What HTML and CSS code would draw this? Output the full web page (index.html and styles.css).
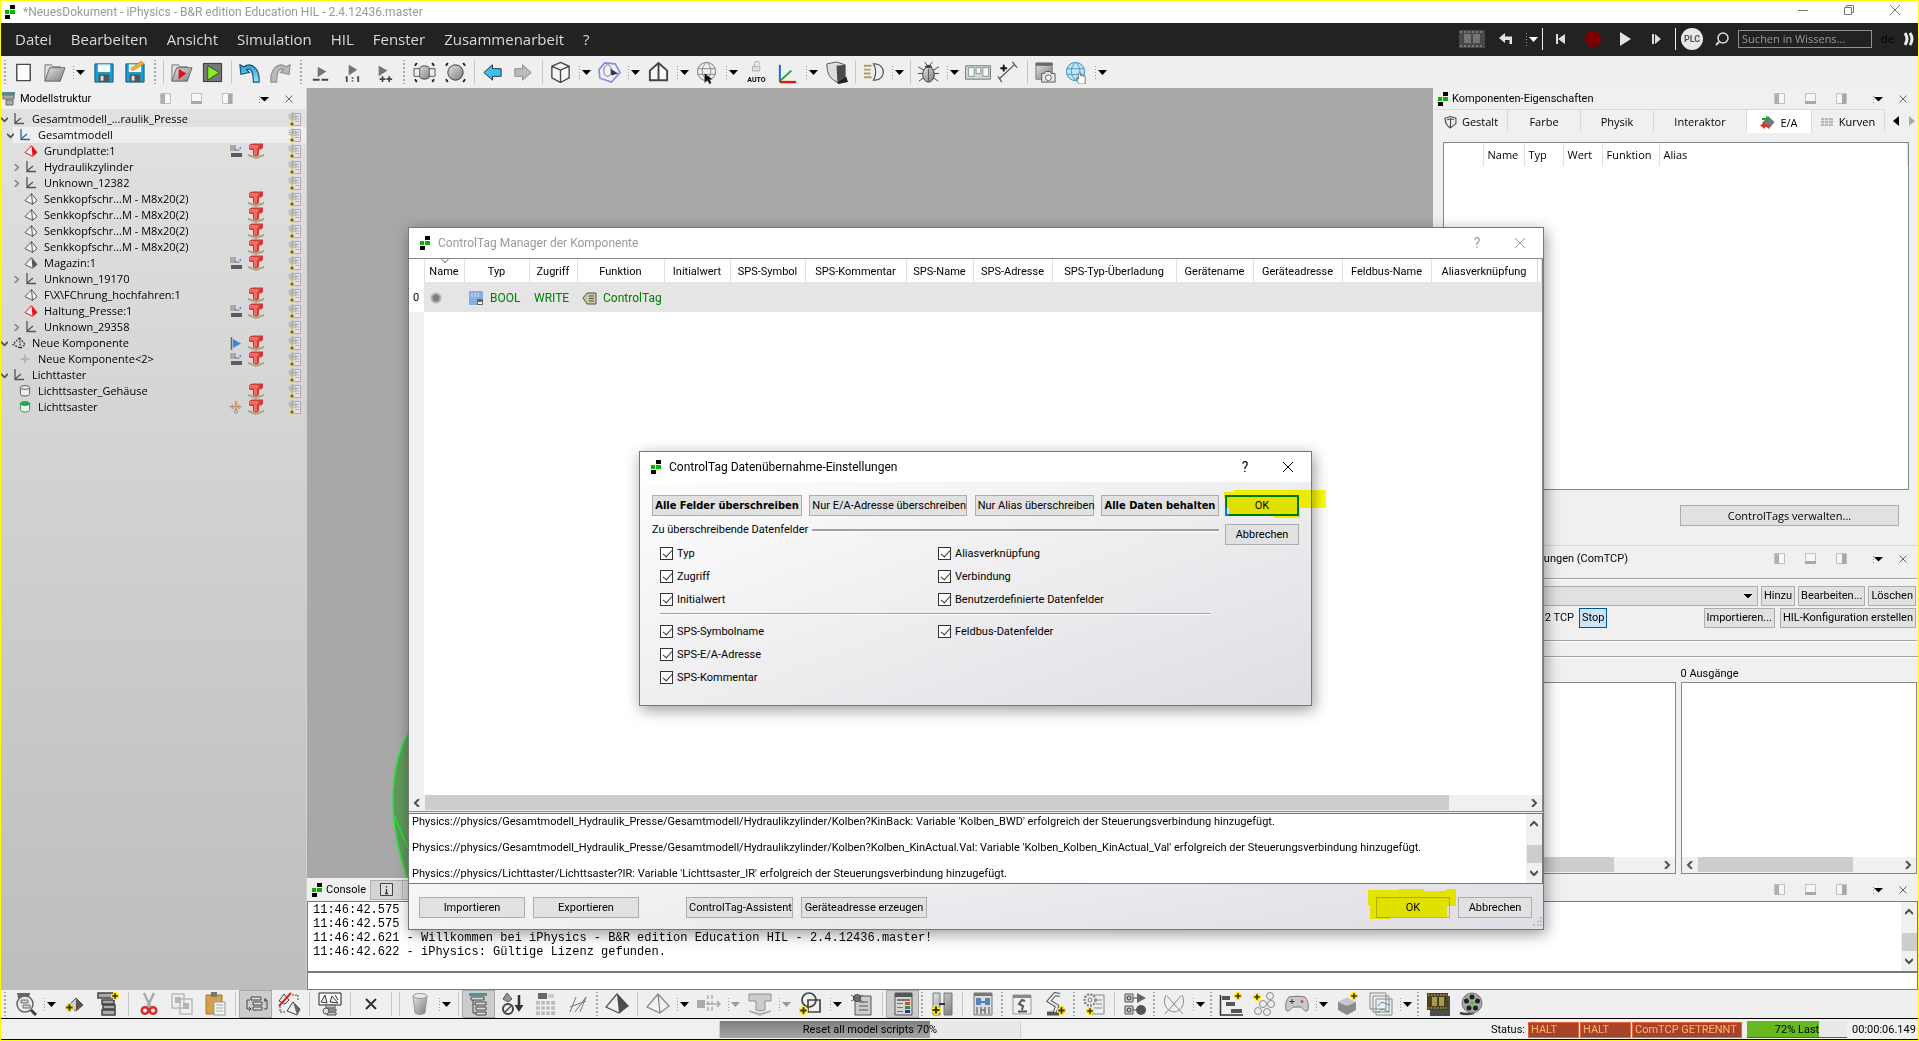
FILE: index.html
```
<!DOCTYPE html>
<html lang="de">
<head>
<meta charset="utf-8">
<title>*NeuesDokument - iPhysics</title>
<link rel="stylesheet" href="styles.css">
</head>
<body>
<svg class="defs" aria-hidden="true">
<defs>
<linearGradient id="gr" x1="0" y1="0" x2="1" y2="1"><stop offset="0" stop-color="#e4e4e4"/><stop offset="1" stop-color="#7c7c7c"/></linearGradient>
<linearGradient id="bl" x1="0" y1="0" x2="0" y2="1"><stop offset="0" stop-color="#1aa3dc"/><stop offset="1" stop-color="#9fe0ff"/></linearGradient>
</defs>
<symbol id="logo" viewBox="0 0 10 14"><path d="M5 0h5v4H5zM0 10h5v4H0z" fill="#000"/><path d="M0 5h4v4H0zM5 5h5v4H5z" fill="#00b400"/></symbol>
<symbol id="dock-l" viewBox="0 0 12 12"><path d="M.5.5h10v10H.5z" fill="#f6f6f6" stroke="#c0c0c0"/><path d="M1 1h4v10H1z" fill="#b0b0b0"/></symbol>
<symbol id="dock-b" viewBox="0 0 12 12"><path d="M.5.5h10v10H.5z" fill="#f6f6f6" stroke="#c0c0c0"/><path d="M0 8h11v3H0z" fill="#a8a8a8"/></symbol>
<symbol id="dock-r" viewBox="0 0 12 12"><path d="M.5.5h10v10H.5z" fill="#f6f6f6" stroke="#c0c0c0"/><path d="M6 1h4v10H6z" fill="#a8a8a8"/></symbol>
<symbol id="dd" viewBox="0 0 14 16"><path d="M1.500 2v13" stroke="#999" stroke-dasharray="1 2"/><path d="M4 6h9L8.500 11z" fill="currentColor"/></symbol>
<symbol id="menu" viewBox="0 0 12 10"><path d="M1 2.500h1M1 5.500h1M1 8.500h1" stroke="#888"/><path d="M2 3h9L6.500 7.500z"/></symbol>
<symbol id="x" viewBox="0 0 10 10"><path d="M1.500 1.500l7 7M8.500 1.500l-7 7" stroke="currentColor" fill="none"/></symbol>
<symbol id="al" viewBox="0 0 8 8"><path d="M6 0L2 4l4 4" fill="none" stroke="#505050" stroke-width="2"/></symbol>
<symbol id="ar" viewBox="0 0 8 8"><path d="M2 0l4 4-4 4" fill="none" stroke="#505050" stroke-width="2"/></symbol>
<symbol id="au" viewBox="0 0 8 8"><path d="M0 6l4-4 4 4" fill="none" stroke="#505050" stroke-width="2"/></symbol>
<symbol id="ad" viewBox="0 0 8 8"><path d="M0 2l4 4 4-4" fill="none" stroke="#505050" stroke-width="2"/></symbol>

<symbol id="t-axes" viewBox="0 0 12 12"><path d="M2 0v10.500h9M2 10l6-5" fill="none" stroke="currentColor" stroke-width="1.300"/></symbol>
<symbol id="t-pyr" viewBox="0 0 14 12"><path d="M7.500.7L1 7.500l7.500 3.800L13 7.500z" fill="#f4f4f4" stroke="currentColor"/><path d="M7.500.7l1 10.600" stroke="currentColor"/></symbol>
<symbol id="t-pyrf" viewBox="0 0 14 12"><path d="M7.500.7L1 7.500l7.500 3.800L13 7.500z" fill="#f4f4f4" stroke="currentColor"/><path d="M7.500.7l1 10.600L13 7.500z" fill="currentColor"/></symbol>
<symbol id="t-dash" viewBox="0 0 14 12"><path d="M7.500.7L1 7.500l7.500 3.800L13 7.500zl1 10.600" fill="none" stroke="#444" stroke-width="1.300" stroke-dasharray="2 1"/></symbol>
<symbol id="t-star" viewBox="0 0 14 14"><path d="M7 0l1.500 5.500L14 7 8.500 8.500 7 14 5.500 8.500 0 7l5.500-1.500z" fill="#b4b4b4"/></symbol>
<symbol id="t-cup" viewBox="0 0 12 13"><path d="M1 2.500v6.500c0 2 2 3 5 3s5-1 5-3V2.500" fill="#eee" stroke="currentColor"/><ellipse cx="6" cy="2.700" rx="5" ry="2" fill="var(--lid,#eee)" stroke="currentColor"/></symbol>
<symbol id="c-kin" viewBox="0 0 14 13"><path d="M1 0h6v6H1z" fill="#aaa"/><path d="M2 8h11v4H2z" fill="#5c5c5c"/><path d="M6 4c2 3 5 1 6-3" fill="none" stroke="#3e86c8" stroke-width="1.500" stroke-dasharray="2 1"/></symbol>
<symbol id="c-flag" viewBox="0 0 12 13"><path d="M1.500 0v13" stroke="#666" stroke-width="1.500"/><path d="M3 2l8 4.500L3 11z" fill="#3b8ad8"/></symbol>
<symbol id="c-mot" viewBox="0 0 14 14"><path d="M0 6h13M10 4v5M3 4v5" stroke="#999" stroke-width="1.500"/><path d="M7 0v10" stroke="#f0953a" stroke-width="2.500"/><circle cx="7" cy="11.500" r="1.700" fill="#ddd" stroke="#888"/></symbol>
<symbol id="c-red" viewBox="0 0 16 16"><path d="M0 11l8 2.500L16 11v2l-8 3-8-3z" fill="#b5a277"/><path d="M1 2l3-1.500h11V5l-2 1.500h-2V12l-3 1.500L5 12V7H2L1 6z" fill="#d23a3e"/><path d="M1.500 2h9v3H9v7H6V5.500H1.500z" fill="#f06a6c"/></symbol>
<symbol id="c-cfg" viewBox="0 0 13 15"><path d="M4.500 1.500h8v12h-8z" fill="#e4e4e4" stroke="#aaa"/><path d="M7 4.500h4M7 7h4M7 9.500h4" stroke="#aaa"/><circle cx="4.500" cy="4.500" r="3.300" fill="none" stroke="#aaa" stroke-width="1.500" stroke-dasharray="1.500 .8"/><circle cx="4.500" cy="4.500" r="1.500" fill="none" stroke="currentColor"/><path d="M4 9.500v5M1.500 12h5" stroke="#e8da50" stroke-width="2.500"/><path d="M4 10.500v3M2.500 12h3" stroke="#665a10" stroke-width="1.300"/></symbol>
<symbol id="plus" viewBox="0 0 10 10"><path d="M5 0v10M0 5h10" stroke="#ffe626" stroke-width="5"/><path d="M5 1.500v7M1.500 5h7" stroke="#3a3500" stroke-width="2"/></symbol>

<symbol id="new" viewBox="0 0 24 24"><path d="M5 3.500h14v17H5z" fill="#fff" stroke="#4a4a4a" stroke-width="1.500"/></symbol>
<symbol id="open" viewBox="0 0 24 24"><path d="M2 21V4h7l1 2h8v4" fill="#ddd" stroke="#777"/><path d="M2 21L7 7h16l-5 14z" fill="url(#gr)" stroke="#666"/></symbol>
<symbol id="save" viewBox="0 0 24 24"><path d="M3 3h19v19H3z" fill="#1d9bd1" stroke="#0e5e85"/><path d="M6 3.500h13v8H6z" fill="#f6f6f6"/><path d="M7 14h11v8H7z" fill="#555"/><path d="M9 15.500h3v5H9z" fill="#ddd"/></symbol>
<symbol id="saveas" viewBox="0 0 24 24"><use href="#save"/><path d="M8 8L19 0l3 3L10 10z" fill="#f2b526" stroke="#a87508" stroke-width=".6"/></symbol>
<symbol id="runf" viewBox="0 0 24 24"><use href="#open"/><path d="M9 8l8 5-8 6z" fill="#e01010"/></symbol>
<symbol id="rung" viewBox="0 0 24 24"><path d="M2.500 2.500h19v19h-19z" fill="#777" stroke="#333"/><path d="M7 5l12 7-12 8z" fill="#84f01c" stroke="#234" stroke-width=".8"/></symbol>
<symbol id="undo" viewBox="0 0 24 24"><path d="M2 4l1 10 9-2-3-3c4-2 7 1 7 13h6C23 9 15 0 6 6z" fill="url(#bl)" stroke="#20506c" stroke-width="1.200"/></symbol>
<symbol id="redo" viewBox="0 0 24 24"><path d="M22 4l-1 10-9-2 3-3c-4-2-7 1-7 13H2C1 9 9 0 18 6z" fill="#b9b9b9" stroke="#909090" stroke-width="1.200"/></symbol>
<symbol id="slow" viewBox="0 0 24 24"><path d="M8 6l9 5-9 6z" fill="#747474"/><path d="M3 19.500h7M12 19.500h7" stroke="#444" stroke-width="2"/></symbol>
<symbol id="one" viewBox="0 0 24 24"><path d="M8 4l9 5-9 6z" fill="#747474"/><path d="M6 16v6M18 16v6M12 17v1.500M12 20v1.500M5 17.500l1-1M17 17.500l1-1" stroke="#444" stroke-width="1.800"/></symbol>
<symbol id="fast" viewBox="0 0 24 24"><path d="M7 5l9 5-9 6z" fill="#747474"/><path d="M8 19h6M11 16v6M15 19h6M18 16v6" stroke="#444" stroke-width="1.800"/></symbol>
<symbol id="fit" viewBox="0 0 24 24"><path d="M2 5l2-3M20 2l2 3M22 19l-2 3M4 22l-2-3" fill="none" stroke="#222" stroke-width="2"/><circle cx="12" cy="12" r="7" fill="url(#gr)" stroke="#444"/><path d="M1 8h6v8H1zM17 8h6v8h-6z" fill="#eee" stroke="#555"/></symbol>
<symbol id="fit2" viewBox="0 0 24 24"><path d="M2 5l2-3M20 2l2 3M22 19l-2 3M4 22l-2-3" fill="none" stroke="#222" stroke-width="2"/><circle cx="12" cy="12" r="8" fill="url(#gr)" stroke="#333"/></symbol>
<symbol id="left" viewBox="0 0 24 24"><path d="M3 12l9-8v4h9v8h-9v4z" fill="#3dbdf2" stroke="#234" /></symbol>
<symbol id="right" viewBox="0 0 24 24"><path d="M20 12l-9-8v4H3v8h8v4z" fill="#bbb" stroke="#888"/></symbol>
<symbol id="cube" viewBox="0 0 24 24"><path d="M12 1.500l9 4v12l-9 5-9-5v-12zM3 5.500l9 4 9-4M12 9.500v13" fill="#f6f6f6" stroke="#444" stroke-width="1.400"/></symbol>
<symbol id="gem" viewBox="0 0 24 24"><path d="M7 2l11 1 5 9-9 10L2 18 1 9z" fill="#eef" stroke="#8b8bdc" stroke-width="1.700"/><ellipse cx="10" cy="10" rx="4" ry="6" fill="none" stroke="#777"/><path d="M13 8l8 5-7 2z" fill="#333"/></symbol>
<symbol id="house" viewBox="0 0 24 24"><path d="M12 2l9 8v10H3V10zM12 2v18" fill="#fafafa" stroke="#444" stroke-width="2"/></symbol>
<symbol id="globe" viewBox="0 0 24 24"><circle cx="11" cy="11" r="9.500" fill="#eee" stroke="#777"/><path d="M2 8h18M2 14h18M11 1c-6 6-6 13 0 19M11 1c6 6 6 13 0 19" fill="none" stroke="#888"/><path d="M9 13v10l3-3 2 4 2-1-2-4h3z" fill="#111"/></symbol>
<symbol id="lock" viewBox="0 0 24 24"><path d="M9 8V4a3.500 3.500 0 017 0v2" fill="none" stroke="#aaa" stroke-width="1.500"/><path d="M6 8h11v7H6z" fill="#ddd" stroke="#999"/></symbol>
<symbol id="axes" viewBox="0 0 24 24"><path d="M4 4v18" stroke="#1468c8" stroke-width="2"/><path d="M4 21L16 10" stroke="#20a038" stroke-width="2"/><path d="M4 22h17" stroke="#e01818" stroke-width="2.500"/></symbol>
<symbol id="shield" viewBox="0 0 24 24"><path d="M12 22l10-6 2 6-10 2z" fill="#222"/><path d="M2 3l10-2 9 3v12l-8 6c-8-3-11-9-11-19z" fill="#ddd" stroke="#555"/><path d="M12 5l9-1v12l-8 6z" fill="#4a4a4a"/></symbol>
<symbol id="light" viewBox="0 0 24 24"><path d="M2 5h8M2 9h7M2 13h7M2 17h8" stroke="#a6a268" stroke-width="2"/><path d="M12 3h2c11 1 11 16 0 17h-2c3-5 3-12 0-17z" fill="#eee" stroke="#555" stroke-width="1.300"/></symbol>
<symbol id="bug" viewBox="0 0 24 24"><path d="M1 6l7 4M23 6l-7 4M1 13h22M2 21l7-5M22 21l-7-5M8 1l3 4M16 1l-3 4" stroke="#444"/><ellipse cx="12" cy="14" rx="6" ry="8" fill="url(#gr)" stroke="#333"/><path d="M8 7c1-4 7-4 8 0z" fill="#444"/><path d="M12 8v13" stroke="#555"/></symbol>
<symbol id="panel" viewBox="0 0 28 24"><path d="M1 5h26v14H1z" fill="#cfd8d4" stroke="#777"/><path d="M4 7h6v9H4zM12 7h5v6h-5zM19 7h6v9h-6z" fill="#f4f8f6" stroke="#8a9a94"/></symbol>
<symbol id="pen" viewBox="0 0 24 24"><path d="M3 18L18 4M1 16l4 6M16 1l5 6" stroke="#555" stroke-width="1.300"/><path d="M7 4v7M3.500 7.500h7" stroke="#111" stroke-width="2"/></symbol>
<symbol id="cam" viewBox="0 0 24 24"><path d="M2 2h17v17H2z" fill="url(#gr)" stroke="#777"/><path d="M2 2h17v3H2z" fill="#666"/><path d="M8 13h3l1-2h5l1 2h4v9H8z" fill="#e6e6e6" stroke="#555"/><circle cx="15" cy="17.500" r="3" fill="#fff" stroke="#555"/></symbol>
<symbol id="web" viewBox="0 0 24 24"><circle cx="11" cy="11" r="9.500" fill="#bfe3f4" stroke="#3d89b0"/><path d="M2 8h18M2 14h18M11 1c-6 6-6 13 0 19M11 1c6 6 6 13 0 19" fill="none" stroke="#4e9cc4"/><path d="M14 13v6l-2-1 1 4 2 2h6v-8l-5-1v-3z" fill="#fff" stroke="#555" stroke-width=".8"/></symbol>

<symbol id="find" viewBox="0 0 24 24"><path d="M3 1h13l-1 5H4z" fill="#666"/><circle cx="11" cy="12" r="8" fill="#e8eceb" stroke="#666" stroke-width="1.500"/><path d="M7 8h7v3H7zM9 13h7v3H9z" fill="#ccc" stroke="#777"/><path d="M17 18l5 5" stroke="#444" stroke-width="3"/></symbol>
<symbol id="conep" viewBox="0 0 24 24"><path d="M13 6l-8 8 8 5 7-6z" fill="#ccc" stroke="#555"/><path d="M13 6v13l7-6z" fill="#555"/><use href="#plus" x="2" y="11" width="9" height="9"/></symbol>
<symbol id="stackp" viewBox="0 0 24 24"><path d="M2 1h15v5H2zM6 8h12v4H6zM7 13h12v4H7zM6 18h13v5H6z" fill="#aaa" stroke="#444" stroke-width="1.500"/><use href="#plus" x="15" y="0" width="8" height="8"/></symbol>
<symbol id="cut" viewBox="0 0 24 24"><path d="M7 1l7 15M17 1l-7 15" stroke="#aaa" stroke-width="2.500"/><circle cx="8" cy="18.500" r="3.300" fill="none" stroke="#d82c30" stroke-width="2.500"/><circle cx="16" cy="18.500" r="3.300" fill="none" stroke="#d82c30" stroke-width="2.500"/></symbol>
<symbol id="copy" viewBox="0 0 24 24"><path d="M2 2h12v14H2zM10 7h12v15H10z" fill="#eee" stroke="#bbb" stroke-width="1.500"/><path d="M5 5h6v6H5zM13 11h6v6h-6z" fill="#b4b4b4"/></symbol>
<symbol id="paste" viewBox="0 0 24 24"><path d="M3 3h16v19H3z" fill="#d5a04a" stroke="#a87424"/><path d="M8 0h6v5H8z" fill="#777"/><path d="M11 10h11v13H11z" fill="#f4f4f4" stroke="#999"/><path d="M13 13h7M13 16h7M13 19h7" stroke="#aaa"/></symbol>
<symbol id="list" viewBox="0 0 24 24"><path d="M7 5h10v3H7zM9 10h9v3H9zM9 15h9v3H9z" fill="#ddd" stroke="#444"/><path d="M6 8H3v9h4M5 15l2 2-2 2M20 17h3V8h-3M22 6l-2 2 2 2" fill="none" stroke="#444"/></symbol>
<symbol id="strike" viewBox="0 0 24 24"><path d="M7 2L2 9l6 3 4-4zM16 10l-6 9 10 4 3-6z" fill="#eee" stroke="#444"/><path d="M16 10l4 13 3-6z" fill="#666"/><path d="M15 3h6v5M3 14v6h5" fill="none" stroke="#444" stroke-dasharray="2 1"/><path d="M2 14L14 1" stroke="#e02020" stroke-width="2"/></symbol>
<symbol id="present" viewBox="0 0 24 24"><path d="M1 1h22v12H1z" fill="#fff" stroke="#222"/><path d="M7 3l-4 7 6 1zM14 4l-2 6 8 1zM17 3l3 5" fill="#eee" stroke="#333"/><path d="M8 13h9v3H8zM9 17h9v2H9zM9 20h9v3H9z" fill="#bbb" stroke="#555"/><circle cx="8" cy="19" r="3" fill="#ddd" stroke="#555"/></symbol>
<symbol id="bigx" viewBox="0 0 24 24"><path d="M7 7l10 10M17 7L7 17" stroke="#333" stroke-width="2"/></symbol>
<symbol id="trash" viewBox="0 0 24 24"><path d="M5 4l2 17c3 2 7 2 10 0l2-17z" fill="url(#gr)" stroke="#999"/><ellipse cx="12" cy="4" rx="7" ry="2.500" fill="#e8e8e8" stroke="#999"/></symbol>
<symbol id="tree" viewBox="0 0 24 24"><path d="M4 5h13v3H4zM8 10h11v3H8zM9 15h10v3H9zM9 20h10v3H9z" fill="#ddd" stroke="#444"/><path d="M2 1h18v3H2z" fill="#3f9c9c"/><path d="M6 8v13h3" fill="none" stroke="#444"/></symbol>
<symbol id="sort" viewBox="0 0 24 24"><path d="M7 1L3 7l5 3 4-3z" fill="#999" stroke="#555"/><circle cx="8" cy="17" r="5" fill="none" stroke="#444" stroke-width="2"/><path d="M4.500 20.500l7-7" stroke="#444" stroke-width="1.500"/><path d="M19 3v14" stroke="#333" stroke-width="2.500"/><path d="M14.500 13h9L19 20z" fill="#333"/></symbol>
<symbol id="grid" viewBox="0 0 24 24"><path d="M5 1h9v6H5z" fill="#666"/><path d="M15 2h6v4h-6z" fill="#ccc"/><path d="M3 9h19v14H3z" fill="#bcbcbc"/><path d="M3 13.500h19M3 18.500h19M7.500 9v14M12.500 9v14M17.500 9v14" stroke="#f2f2f2" stroke-width="1.300"/></symbol>
<symbol id="hatch" viewBox="0 0 24 24"><path d="M4 20l6-15M9 20L20 5M14 20l6-15M4 15l16-6" fill="none" stroke="#777"/></symbol>
<symbol id="pyr" viewBox="0 0 24 24"><path d="M12 2L1 15l13 6 9-7z" fill="#f2f2f2" stroke="#555" stroke-width="1.300"/><path d="M12 2l2 19 9-7z" fill="#4c4c4c"/></symbol>
<symbol id="pyro" viewBox="0 0 24 24"><path d="M12 2L1 15l13 6 9-7zl2 19" fill="#f2f2f2" stroke="#888" stroke-width="1.300"/></symbol>
<symbol id="pipe" viewBox="0 0 24 24"><path d="M0 8h8v8H0z" fill="#aaa"/><path d="M11 3v18M15 3v18" stroke="#bbb" stroke-width="2" stroke-dasharray="4 2"/><path d="M9 12h14M20 9l3 3-3 3" fill="none" stroke="#aaa" stroke-width="1.500"/></symbol>
<symbol id="tee" viewBox="0 0 24 24"><path d="M1 18l11 3 11-3v2l-11 4-11-4z" fill="#b4b4b4"/><path d="M1 2h22v7h-6v9l-5 1-4-1V9H1z" fill="#ccc" stroke="#909090"/></symbol>
<symbol id="shapes" viewBox="0 0 24 24"><circle cx="10" cy="8" r="7" fill="none" stroke="#444" stroke-width="1.700"/><path d="M9 8h12v12H9z" fill="none" stroke="#444" stroke-width="1.700"/><use href="#plus" x="0" y="14" width="9" height="9"/></symbol>
<symbol id="buglist" viewBox="0 0 24 24"><path d="M5 4h16v19H5z" fill="#ccc" stroke="#555"/><path d="M9 10h9M9 14h9M9 18h9" stroke="#555"/><circle cx="7" cy="6" r="3.500" fill="#888" stroke="#333"/><path d="M1 3l12 7M1 9l12-6" stroke="#444" stroke-width=".8"/></symbol>
<symbol id="props" viewBox="0 0 24 24"><path d="M4 1h17v22H4z" fill="#d6d6d6" stroke="#555"/><path d="M4 1h17v4H4z" fill="#555"/><path d="M6 7h13v2H6zM6 11h6v1H6zM6 15h6v1H6zM6 19h6v1H6z" fill="#777"/><path d="M14 10h5v3h-5z" fill="#d05020"/><path d="M14 14h5v3h-5z" fill="#28903c"/><path d="M14 18h5v3h-5z" fill="#203c90"/></symbol>
<symbol id="hplus" viewBox="0 0 24 24"><path d="M3 1h7v22H3zM14 1h8v22h-8z" fill="url(#gr)" stroke="#777"/><path d="M9 12h6" stroke="#333" stroke-width="2"/><use href="#plus" x="1" y="13" width="10" height="10"/></symbol>
<symbol id="hh" viewBox="0 0 24 24"><path d="M3 1h18v22H3z" fill="#ddd" stroke="#777"/><path d="M3 1h18v3H3z" fill="#777"/><path d="M5 6h5v7H5zM14 6h5v7h-5zM8 9h8v2H8z" fill="#5c80b8"/><path d="M6 15v7M10 15v7M14 15v7M18 15v7M10 18h4" stroke="#444"/></symbol>
<symbol id="robot" viewBox="0 0 24 24"><path d="M3 3h18v19H3z" fill="#f0f0f0" stroke="#999"/><path d="M3 3h18v3H3z" fill="#888"/><path d="M15 9l-3-1-3 4 4 2-1 4M8 19.500h9" fill="none" stroke="#555" stroke-width="2"/></symbol>
<symbol id="robotp" viewBox="0 0 24 24"><path d="M17 3l-5-1-6 7 8 5-2 6M4 21.500h12" fill="none" stroke="#555" stroke-width="4"/><path d="M17 3l-5-1-6 7 8 5-2 6" fill="none" stroke="#eee" stroke-width="2"/><use href="#plus" x="14" y="14" width="9" height="9"/></symbol>
<symbol id="gearp" viewBox="0 0 24 24"><path d="M9 3h13v19H9z" fill="#eee" stroke="#888"/><path d="M14 8h6M14 12h6M12 16h8" stroke="#888"/><circle cx="8" cy="8" r="5.500" fill="#eee" stroke="#888" stroke-width="2.500" stroke-dasharray="2 1.200"/><circle cx="8" cy="8" r="2" fill="none" stroke="#777"/><use href="#plus" x="4" y="15" width="8" height="8"/></symbol>
<symbol id="playg" viewBox="0 0 24 24"><path d="M2 2h8v8H2zM2 14h8v8H2z" fill="#ccc" stroke="#555"/><circle cx="6" cy="6" r="2" fill="none" stroke="#333"/><circle cx="6" cy="18" r="2" fill="none" stroke="#333"/><path d="M10 6h4M10 18h4" stroke="#444"/><path d="M14 1l9 5-9 5z" fill="#666"/><circle cx="18" cy="18" r="5" fill="#555"/></symbol>
<symbol id="arcs" viewBox="0 0 24 24"><path d="M4 3c-4 8 0 16 8 17 8-1 12-9 8-17M3 22L19 4M21 22L5 4" fill="none" stroke="#8c8c8c"/></symbol>
<symbol id="gantt" viewBox="0 0 24 24"><path d="M1.500 3v20H24" fill="none" stroke="#333" stroke-width="1.500"/><path d="M3 4h8v4H3zM7 10h9v4H7zM12 17h11v4H12z" fill="#555"/><use href="#plus" x="15" y="0" width="8" height="8"/></symbol>
<symbol id="chain" viewBox="0 0 24 24"><g fill="#eee" stroke="#888"><circle cx="18" cy="4" r="3.500"/><circle cx="19" cy="12" r="3.500"/><circle cx="11" cy="12" r="3.500"/><circle cx="6" cy="19" r="3.500"/><circle cx="15" cy="20" r="3.500"/></g><use href="#plus" x="1" y="1" width="8" height="8"/></symbol>
<symbol id="pad" viewBox="0 0 24 24"><path d="M4 5c4-1 12-1 16 0 3 3 4 9 3 13-2 3-5-1-7-3H8c-2 2-5 6-7 3C0 14 1 8 4 5z" fill="#c9c9c9" stroke="#777"/><path d="M7 7v5M4.500 9.500h5" stroke="#333"/><circle cx="17" cy="9.500" r="1.500" fill="#d05050"/></symbol>
<symbol id="boxp" viewBox="0 0 24 24"><path d="M2 10l9-4 9 4v8l-9 5-9-5z" fill="#8c8c8c"/><path d="M2 10l9-4 9 4-9 4z" fill="#c8c8c8"/><use href="#plus" x="14" y="0" width="8" height="8"/></symbol>
<symbol id="curves" viewBox="0 0 24 24"><path d="M1 1h16v16H1zM4 4h16v16H4zM7 7h16v16H7z" fill="#eee" stroke="#888"/><path d="M9 14c4-7 6-2 12-1" fill="none" stroke="#4090c8"/><path d="M9 21c4-7 6-2 12-1" fill="none" stroke="#30a850"/></symbol>
<symbol id="film" viewBox="0 0 24 24"><path d="M4 4h20v20H4z" fill="#4d4d4d"/><path d="M1 1h21v17H1z" fill="#4c4218"/><path d="M6 5h5v9H6zM13 5h5v9h-5z" fill="#a8985a"/><path d="M2 3h19M2 16h19" stroke="#d8c888" stroke-dasharray="1.500 1.500"/></symbol>
<symbol id="reel" viewBox="0 0 24 24"><path d="M1 21c6 2 10 1 14 0" stroke="#444" stroke-width="2.500" fill="none"/><circle cx="13" cy="11" r="10" fill="#a6a6a6" stroke="#777"/><g fill="#222"><circle cx="13" cy="5" r="2.500"/><circle cx="18.500" cy="9" r="2.500"/><circle cx="7.500" cy="9" r="2.500"/><circle cx="10" cy="16" r="2.500"/><circle cx="16.500" cy="16" r="2.500"/></g><circle cx="13" cy="11" r="2" fill="#52c832"/></symbol>
</svg>

<div class="app">
<header class="titlebar">
  <svg class="logo"><use href="#logo"/></svg>
  <span class="wtitle dim">*NeuesDokument - iPhysics - B&amp;R edition Education HIL - 2.4.12436.master</span>
  <span class="wincontrols">
    <button aria-label="Minimieren"><svg width="12" height="12"><path d="M1 6.500h10" stroke="#777"/></svg></button>
    <button aria-label="Wiederherstellen"><svg width="12" height="12"><path d="M1.500 3.500h7v7h-7zM3.500 3V1.500h7v7H9" fill="none" stroke="#777"/></svg></button>
    <button aria-label="Schließen"><svg width="12" height="12"><path d="M1 1l10 10M11 1L1 11" stroke="#777"/></svg></button>
  </span>
</header>

<nav class="menubar">
  <button>Datei</button><button>Bearbeiten</button><button>Ansicht</button><button>Simulation</button><button>HIL</button><button>Fenster</button><button>Zusammenarbeit</button><button>?</button>
  <div class="playback">
    <button aria-label="Film"><svg width="27" height="20"><path d="M0 1h26v18H0z" fill="#484848"/><path d="M5 5h7v9H5zM14 5h7v9h-7z" fill="#747474"/><path d="M1 3h24M1 17h24" stroke="#888" stroke-width="1.500" stroke-dasharray="2 2"/></svg></button>
    <button aria-label="Zurück" class="w-m"><svg width="14" height="14"><path d="M0 6l6-5v3.500h7V12h-2.500V8H6v3z" fill="#e4e4e4"/></svg></button>
    <button aria-label="Mehr" class="w-s"><svg width="14" height="16"><use href="#dd"/></svg></button>
    <i class="vbar"></i>
    <button aria-label="Anfang"><svg width="12" height="12"><path d="M1 1h2v10H1zM10 1v10L3 6z" fill="#ddd"/></svg></button>
    <button aria-label="Aufnahme"><svg width="18" height="18"><circle cx="9" cy="9" r="8" fill="#800000"/></svg></button>
    <button aria-label="Start"><svg width="14" height="16"><path d="M2 1l11 7-11 7z" fill="#e4e4e4"/></svg></button>
    <button aria-label="Schritt"><svg width="12" height="12"><path d="M1 1h2v10H1zM4 1l6 5-6 5z" fill="#ddd"/></svg></button>
    <i class="vbar"></i>
    <span class="plc">PLC</span>
    <svg class="lens" width="14" height="14"><circle cx="8" cy="6" r="5" fill="none" stroke="#ddd" stroke-width="1.500"/><path d="M4 10l-3 3" stroke="#ddd" stroke-width="2"/></svg>
    <input type="text" placeholder="Suchen in Wissens..." aria-label="Suchen">
    <span class="lang">de</span>
    <button aria-label="Weitere" class="w-x"><svg width="11" height="14"><path d="M1 1q4 6 0 12M6 1q4 6 0 12" fill="none" stroke="#eee" stroke-width="3"/></svg></button>
  </div>
</nav>

<div class="toolbar top">
  <i class="grip first"></i><button aria-label="Neu"><svg><use href="#new"/></svg></button><button aria-label="Öffnen"><svg><use href="#open"/></svg></button><button class="dd" aria-label="Auswahl"><svg><use href="#dd"/></svg></button><button aria-label="Speichern"><svg><use href="#save"/></svg></button><button aria-label="Speichern unter"><svg><use href="#saveas"/></svg></button>
  <i class="grip"></i><i class="sep"></i><button aria-label="Skript öffnen"><svg><use href="#runf"/></svg></button><button aria-label="Ausführen"><svg><use href="#rung"/></svg></button>
  <i class="sep"></i><button aria-label="Rückgängig"><svg><use href="#undo"/></svg></button><button aria-label="Wiederholen"><svg><use href="#redo"/></svg></button>
  <i class="grip"></i><button aria-label="Langsamer"><svg><use href="#slow"/></svg></button><button aria-label="Echtzeit"><svg><use href="#one"/></svg></button><button aria-label="Schneller"><svg><use href="#fast"/></svg></button>
  <i class="grip"></i><button aria-label="Auswahl einpassen"><svg><use href="#fit"/></svg></button><button aria-label="Alles einpassen"><svg><use href="#fit2"/></svg></button>
  <i class="sep"></i><button aria-label="Ansicht zurück"><svg><use href="#left"/></svg></button><button aria-label="Ansicht vor"><svg><use href="#right"/></svg></button>
  <i class="sep"></i><button aria-label="Würfel"><svg><use href="#cube"/></svg></button><button class="dd" aria-label="Auswahl"><svg><use href="#dd"/></svg></button><button aria-label="Auswahlmodus"><svg><use href="#gem"/></svg></button><button class="dd" aria-label="Auswahl"><svg><use href="#dd"/></svg></button><button aria-label="Kanten"><svg><use href="#house"/></svg></button><button class="dd" aria-label="Auswahl"><svg><use href="#dd"/></svg></button><button aria-label="Drehen"><svg><use href="#globe"/></svg></button><button class="dd" aria-label="Auswahl"><svg><use href="#dd"/></svg></button>
  <button class="auto" aria-label="Sperre"><svg><use href="#lock"/></svg><b>AUTO</b></button><button aria-label="Achsen"><svg><use href="#axes"/></svg></button><button class="dd" aria-label="Auswahl"><svg><use href="#dd"/></svg></button><button aria-label="Schatten"><svg><use href="#shield"/></svg></button>
  <i class="sep"></i><button aria-label="Licht"><svg><use href="#light"/></svg></button><button class="dd" aria-label="Auswahl"><svg><use href="#dd"/></svg></button>
  <i class="sep"></i><button aria-label="Debug"><svg><use href="#bug"/></svg></button><button class="dd" aria-label="Auswahl"><svg><use href="#dd"/></svg></button><button aria-label="Bedienfeld"><svg class="wide"><use href="#panel"/></svg></button><button aria-label="Messen"><svg><use href="#pen"/></svg></button>
  <i class="sep"></i><button aria-label="Bild"><svg><use href="#cam"/></svg></button><button aria-label="Web"><svg><use href="#web"/></svg></button><button class="dd" aria-label="Auswahl"><svg><use href="#dd"/></svg></button>
</div>

<main class="work">
<aside class="model">
  <div class="dockhead"><svg width="14" height="16"><path d="M1 4h11v4H1zM4 9h7v5H4z" fill="#aaa" stroke="#666"/><path d="M0 1h13v3H0z" fill="#5a8a8a"/></svg><h2>Modellstruktur</h2>
    <span class="dockbtns"><svg><use href="#dock-l"/></svg><svg><use href="#dock-b"/></svg><svg><use href="#dock-r"/></svg><svg class="m"><use href="#menu"/></svg><svg class="c"><use href="#x"/></svg></span></div>
  <ul class="tree">
    <li class="l1"><svg class="tw"><use href="#ad"/></svg><svg class="ic"><use href="#t-axes"/></svg><span>Gesamtmodell_...raulik_Presse</span><i></i><i></i><svg class="cf"><use href="#c-cfg"/></svg></li>
    <li class="l2 sel"><svg class="tw"><use href="#ad"/></svg><svg class="ic blue"><use href="#t-axes"/></svg><span>Gesamtmodell</span><i></i><i></i><svg class="cf blue"><use href="#c-cfg"/></svg></li>
    <li class="l3"><i class="tw"></i><svg class="ic red"><use href="#t-pyrf"/></svg><span>Grundplatte:1</span><svg class="a"><use href="#c-kin"/></svg><svg class="b"><use href="#c-red"/></svg><svg class="cf"><use href="#c-cfg"/></svg></li>
    <li class="l3"><svg class="tw thin"><use href="#ar"/></svg><svg class="ic"><use href="#t-axes"/></svg><span>Hydraulikzylinder</span><i></i><i></i><svg class="cf"><use href="#c-cfg"/></svg></li>
    <li class="l3"><svg class="tw thin"><use href="#ar"/></svg><svg class="ic"><use href="#t-axes"/></svg><span>Unknown_12382</span><i></i><i></i><svg class="cf"><use href="#c-cfg"/></svg></li>
    <li class="l3"><i class="tw"></i><svg class="ic"><use href="#t-pyr"/></svg><span>Senkkopfschr...M - M8x20(2)</span><i></i><svg class="b"><use href="#c-red"/></svg><svg class="cf"><use href="#c-cfg"/></svg></li>
    <li class="l3"><i class="tw"></i><svg class="ic"><use href="#t-pyr"/></svg><span>Senkkopfschr...M - M8x20(2)</span><i></i><svg class="b"><use href="#c-red"/></svg><svg class="cf"><use href="#c-cfg"/></svg></li>
    <li class="l3"><i class="tw"></i><svg class="ic"><use href="#t-pyr"/></svg><span>Senkkopfschr...M - M8x20(2)</span><i></i><svg class="b"><use href="#c-red"/></svg><svg class="cf"><use href="#c-cfg"/></svg></li>
    <li class="l3"><i class="tw"></i><svg class="ic"><use href="#t-pyr"/></svg><span>Senkkopfschr...M - M8x20(2)</span><i></i><svg class="b"><use href="#c-red"/></svg><svg class="cf"><use href="#c-cfg"/></svg></li>
    <li class="l3"><i class="tw"></i><svg class="ic"><use href="#t-pyrf"/></svg><span>Magazin:1</span><svg class="a"><use href="#c-kin"/></svg><svg class="b"><use href="#c-red"/></svg><svg class="cf"><use href="#c-cfg"/></svg></li>
    <li class="l3"><svg class="tw thin"><use href="#ar"/></svg><svg class="ic"><use href="#t-axes"/></svg><span>Unknown_19170</span><i></i><i></i><svg class="cf"><use href="#c-cfg"/></svg></li>
    <li class="l3"><i class="tw"></i><svg class="ic"><use href="#t-pyr"/></svg><span>F\X\FChrung_hochfahren:1</span><i></i><svg class="b"><use href="#c-red"/></svg><svg class="cf"><use href="#c-cfg"/></svg></li>
    <li class="l3"><i class="tw"></i><svg class="ic red"><use href="#t-pyrf"/></svg><span>Haltung_Presse:1</span><svg class="a"><use href="#c-kin"/></svg><svg class="b"><use href="#c-red"/></svg><svg class="cf"><use href="#c-cfg"/></svg></li>
    <li class="l3"><svg class="tw thin"><use href="#ar"/></svg><svg class="ic"><use href="#t-axes"/></svg><span>Unknown_29358</span><i></i><i></i><svg class="cf"><use href="#c-cfg"/></svg></li>
    <li class="l1"><svg class="tw"><use href="#ad"/></svg><svg class="ic"><use href="#t-dash"/></svg><span>Neue Komponente</span><svg class="a"><use href="#c-flag"/></svg><svg class="b"><use href="#c-red"/></svg><svg class="cf"><use href="#c-cfg"/></svg></li>
    <li class="l2"><i class="tw"></i><svg class="ic"><use href="#t-star"/></svg><span>Neue Komponente&lt;2&gt;</span><svg class="a"><use href="#c-kin"/></svg><svg class="b"><use href="#c-red"/></svg><svg class="cf"><use href="#c-cfg"/></svg></li>
    <li class="l1"><svg class="tw"><use href="#ad"/></svg><svg class="ic"><use href="#t-axes"/></svg><span>Lichttaster</span><i></i><i></i><svg class="cf"><use href="#c-cfg"/></svg></li>
    <li class="l2"><i class="tw"></i><svg class="ic"><use href="#t-cup"/></svg><span>Lichttsaster_Gehäuse</span><i></i><svg class="b"><use href="#c-red"/></svg><svg class="cf"><use href="#c-cfg"/></svg></li>
    <li class="l2"><i class="tw"></i><svg class="ic green"><use href="#t-cup"/></svg><span>Lichttsaster</span><svg class="a"><use href="#c-mot"/></svg><svg class="b"><use href="#c-red"/></svg><svg class="cf"><use href="#c-cfg"/></svg></li>
  </ul>
</aside>

<section class="viewport" aria-label="3D-Ansicht">
  <svg width="120" height="152" viewBox="0 0 120 152"><path d="M105 0C93 20 86 44 86 74c0 30 7 54 14 78h20V0z" fill="#5f9a5c"/><path d="M105 0C93 20 86 44 86 74c0 30 7 54 14 78M88 90c4 14 8 20 14 34" fill="none" stroke="#22e432" stroke-width="1.500"/></svg>
</section>

<aside class="props">
  <div class="dockhead"><svg class="logo"><use href="#logo"/></svg><h2>Komponenten-Eigenschaften</h2>
    <span class="dockbtns"><svg><use href="#dock-l"/></svg><svg><use href="#dock-b"/></svg><svg><use href="#dock-r"/></svg><svg class="m"><use href="#menu"/></svg><svg class="c"><use href="#x"/></svg></span></div>
  <div class="tabs">
    <button><svg width="13" height="13" viewBox="0 0 24 24"><path d="M2 4l10-3 10 3v10l-10 8C5 18 2 14 2 4zM12 5v17M6 7l6-2 6 2" fill="none" stroke="#444" stroke-width="2"/></svg>Gestalt</button><button>Farbe</button><button>Physik</button><button>Interaktor</button>
    <button class="on"><svg width="15" height="15" viewBox="0 0 15 15"><path d="M8 1l6.500 6L9 14 2 8z" fill="#777"/><path d="M2 3h4V1l4 3-4 3V5H2z" fill="#18a828"/><path d="M9 10H5V7L0 10.500 5 14v-2h4z" fill="#e03020"/></svg>E/A</button>
    <button><svg width="13" height="11"><path d="M0 1h12v8H0z" fill="#b8b8b8"/><path d="M0 3.500h12M0 6.500h12M3.500 0v10M7.500 0v10" stroke="#eee" stroke-width=".7"/></svg>Kurven</button>
    <span class="tabnav"><svg width="6" height="10"><path d="M6 0v10L0 5z"/></svg><svg width="6" height="10"><path d="M0 0v10l6-5z" fill="#aaa"/></svg></span>
  </div>
  <div class="tagtable">
    <table><colgroup><col class="p0"><col class="p1"><col class="p2"><col class="p3"><col class="p4"><col></colgroup>
    <thead><tr><th></th><th>Name</th><th>Typ</th><th>Wert</th><th>Funktion</th><th>Alias</th></tr></thead></table>
  </div>
  <div class="tagbtn"><button class="btn">ControlTags verwalten...</button></div>
  <div class="dockhead com"><h2>Einstellungen (ComTCP)</h2>
    <span class="dockbtns"><svg><use href="#dock-l"/></svg><svg><use href="#dock-b"/></svg><svg><use href="#dock-r"/></svg><svg class="m"><use href="#menu"/></svg><svg class="c"><use href="#x"/></svg></span></div>
  <div class="conn">
    <div class="crow"><select aria-label="Verbindung"><option></option></select><button class="btn">Hinzu</button><button class="btn">Bearbeiten...</button><button class="btn">Löschen</button></div>
    <div class="crow second"><span>502 TCP</span><button class="btn stop">Stop</button><button class="btn imp">Importieren...</button><button class="btn">HIL-Konfiguration erstellen</button></div>
  </div>
  <div class="rule"></div>
  <div class="io">
    <div><div class="list first"><div class="hs"><svg><use href="#al"/></svg><div><i class="t1"></i></div><svg><use href="#ar"/></svg></div></div></div>
    <div><h3>0 Ausgänge</h3><div class="list"><div class="hs"><svg><use href="#al"/></svg><div><i class="t2"></i></div><svg><use href="#ar"/></svg></div></div></div>
  </div>
</aside>

<section class="console">
  <div class="dockhead ctabs"><svg class="logo"><use href="#logo"/></svg><h2>Console</h2><button aria-label="Info"><svg width="13" height="13"><path d="M.5.5h12v12H.5z" fill="#ddd" stroke="#444"/><path d="M6.500 3v1.500M6.500 6v4M5 10.500h3" stroke="#333" stroke-width="1.300"/></svg></button><button aria-label="Fehler"></button>
    <span class="dockbtns"><svg><use href="#dock-l"/></svg><svg><use href="#dock-b"/></svg><svg><use href="#dock-r"/></svg><svg class="m"><use href="#menu"/></svg><svg class="c"><use href="#x"/></svg></span></div>
  <div class="out"><pre>11:46:42.575 -
11:46:42.575 -
11:46:42.621 - Willkommen bei iPhysics - B&amp;R edition Education HIL - 2.4.12436.master!
11:46:42.622 - iPhysics: Gültige Lizenz gefunden.</pre><div class="vs"><svg><use href="#au"/></svg><i></i><svg><use href="#ad"/></svg></div></div>
  <input type="text" aria-label="Befehl">
</section>
</main>

<div class="toolbar bottom">
  <i class="grip first"></i><button aria-label="Suchen"><svg><use href="#find"/></svg></button><button class="dd narrow" aria-label="Auswahl"><svg><use href="#dd"/></svg></button><button aria-label="Körper neu"><svg><use href="#conep"/></svg></button><button aria-label="Gruppe neu"><svg><use href="#stackp"/></svg></button>
  <i class="sep"></i><button aria-label="Ausschneiden"><svg><use href="#cut"/></svg></button><button aria-label="Kopieren"><svg><use href="#copy"/></svg></button><button aria-label="Einfügen"><svg><use href="#paste"/></svg></button>
  <i class="sep"></i><button class="on" aria-label="Liste"><svg><use href="#list"/></svg></button><button aria-label="Ersetzen"><svg><use href="#strike"/></svg></button>
  <i class="sep"></i><button aria-label="Präsentation"><svg><use href="#present"/></svg></button>
  <i class="sep"></i><button aria-label="Löschen"><svg><use href="#bigx"/></svg></button>
  <i class="sep"></i><i class="sep"></i><button aria-label="Papierkorb"><svg><use href="#trash"/></svg></button><button class="dd" aria-label="Auswahl"><svg><use href="#dd"/></svg></button>
  <i class="sep"></i><button class="on" aria-label="Baum"><svg><use href="#tree"/></svg></button><button aria-label="Sortieren"><svg><use href="#sort"/></svg></button><button aria-label="Raster"><svg><use href="#grid"/></svg></button><button aria-label="Schraffur"><svg><use href="#hatch"/></svg></button>
  <i class="grip"></i><button aria-label="Körper"><svg><use href="#pyr"/></svg></button>
  <i class="sep"></i><button aria-label="Fläche"><svg><use href="#pyro"/></svg></button><button class="dd" aria-label="Auswahl"><svg><use href="#dd"/></svg></button><button aria-label="Gelenk"><svg><use href="#pipe"/></svg></button><button class="dd off" aria-label="Auswahl"><svg><use href="#dd"/></svg></button><button aria-label="Fixieren"><svg><use href="#tee"/></svg></button><button class="dd off" aria-label="Auswahl"><svg><use href="#dd"/></svg></button><button aria-label="Formen"><svg><use href="#shapes"/></svg></button><button class="dd" aria-label="Auswahl"><svg><use href="#dd"/></svg></button><button aria-label="Fehlerliste"><svg><use href="#buglist"/></svg></button>
  <i class="sep"></i><button class="on" aria-label="Eigenschaften"><svg><use href="#props"/></svg></button>
  <i class="grip"></i><button aria-label="Signal neu"><svg><use href="#hplus"/></svg></button>
  <i class="sep"></i><button aria-label="Signale"><svg><use href="#hh"/></svg></button>
  <i class="grip"></i><button aria-label="Roboter"><svg><use href="#robot"/></svg></button><button aria-label="Roboter neu"><svg><use href="#robotp"/></svg></button>
  <i class="grip"></i><button aria-label="Regel neu"><svg><use href="#gearp"/></svg></button>
  <i class="sep"></i><button aria-label="Ablauf"><svg><use href="#playg"/></svg></button>
  <i class="grip"></i><button aria-label="Bögen"><svg><use href="#arcs"/></svg></button><button class="dd" aria-label="Auswahl"><svg><use href="#dd"/></svg></button>
  <i class="grip"></i><button aria-label="Diagramm neu"><svg><use href="#gantt"/></svg></button><button aria-label="Kette neu"><svg><use href="#chain"/></svg></button><button aria-label="Gamepad"><svg><use href="#pad"/></svg></button><button class="dd" aria-label="Auswahl"><svg><use href="#dd"/></svg></button><button aria-label="Paket neu"><svg><use href="#boxp"/></svg></button><button aria-label="Kurven"><svg><use href="#curves"/></svg></button><button class="dd" aria-label="Auswahl"><svg><use href="#dd"/></svg></button>
  <i class="grip"></i><button aria-label="Filmstreifen"><svg><use href="#film"/></svg></button><button aria-label="Filmrolle"><svg><use href="#reel"/></svg></button>
</div>

<footer class="status">
  <div class="progress"><i style="width:70%"></i><span>Reset all model scripts 70%</span></div>
  <div class="state"><span>Status:</span><b class="halt">HALT</b><b class="halt">HALT</b><b class="halt com">ComTCP GETRENNT</b>
  <div class="load"><i style="width:72%"></i><span>72% Last</span></div><time>00:00:06.149</time></div>
</footer>
</div>

<section class="dialog manager" role="dialog" aria-label="ControlTag Manager der Komponente">
  <div class="dtitle"><svg class="logo"><use href="#logo"/></svg><h1 class="wtitle dim">ControlTag Manager der Komponente</h1><button class="q dim">?</button><button class="cl dim" aria-label="Schließen"><svg width="12" height="12"><path d="M1 1l10 10M11 1L1 11" stroke="currentColor"/></svg></button></div>
  <div class="gridbox">
    <table class="tags">
      <colgroup><col class="w15"><col class="w40"><col class="w65"><col class="w48"><col class="w87"><col class="w66"><col class="w75"><col class="w101"><col class="w67"><col class="w79"><col class="w124"><col class="w77"><col class="w89"><col class="w89"><col class="w106"><col></colgroup>
      <thead><tr><th></th><th class="sorted">Name</th><th>Typ</th><th>Zugriff</th><th>Funktion</th><th>Initialwert</th><th>SPS-Symbol</th><th>SPS-Kommentar</th><th>SPS-Name</th><th>SPS-Adresse</th><th>SPS-Typ-Überladung</th><th>Gerätename</th><th>Geräteadresse</th><th>Feldbus-Name</th><th>Aliasverknüpfung</th><th></th></tr></thead>
      <tbody><tr><td class="no">0</td><td><svg width="14" height="14"><circle cx="7" cy="7" r="5.500" fill="#b4b4b4"/><circle cx="7" cy="7" r="3.500" fill="#7d7d7d"/></svg></td>
      <td><span class="cell"><svg width="15" height="15"><path d="M0 0h14v14H0z" fill="#86aede"/><path d="M3 2v4M6 2v4M9 2v4" stroke="#dce8f6"/><path d="M8 8h6v6H8z" fill="#666"/><path d="M9 11h4v2H9z" fill="#fff"/></svg>BOOL</span></td>
      <td>WRITE</td><td><span class="cell"><svg width="15" height="13"><path d="M1 6l4-5h9v11H5z" fill="#c9c79c" stroke="#555"/><path d="M7 4h5M7 6.500h5M7 9h5" stroke="#555"/></svg>ControlTag</span></td><td></td><td></td><td></td><td></td><td></td><td></td><td></td><td></td><td></td><td></td><td></td></tr></tbody>
    </table>
    <div class="blank"></div>
    <div class="hs"><svg><use href="#al"/></svg><div><i class="t3"></i></div><svg><use href="#ar"/></svg></div>
  </div>
  <div class="log"><div class="lines"><p>Physics://physics/Gesamtmodell_Hydraulik_Presse/Gesamtmodell/Hydraulikzylinder/Kolben?KinBack: Variable 'Kolben_BWD' erfolgreich der Steuerungsverbindung hinzugefügt.</p><p>Physics://physics/Gesamtmodell_Hydraulik_Presse/Gesamtmodell/Hydraulikzylinder/Kolben?Kolben_KinActual.Val: Variable 'Kolben_Kolben_KinActual_Val' erfolgreich der Steuerungsverbindung hinzugefügt.</p><p>Physics://physics/Lichttaster/Lichttsaster?IR: Variable 'Lichttsaster_IR' erfolgreich der Steuerungsverbindung hinzugefügt.</p></div>
    <div class="vs"><svg><use href="#au"/></svg><i></i><svg><use href="#ad"/></svg></div></div>
  <div class="dfoot">
    <button class="btn b106">Importieren</button><button class="btn b106">Exportieren</button><button class="btn b107 gap">ControlTag-Assistent</button><button class="btn b126">Geräteadresse erzeugen</button>
    <span class="mark push"><button class="btn b74">OK</button><svg class="hl" width="88" height="30"><path d="M0 1h30v-1h26v2h20l5-3h7v18h-9v11H22v2H2V16H0z" fill="#ff0"/></svg></span><button class="btn b74">Abbrechen</button>
    <svg class="size" width="9" height="9"><path d="M7 1h2M4 4.500h2M7 4.500h2M0 8h2M4 8h2M7 8h2" stroke="#bbb" stroke-width="2"/></svg>
  </div>
</section>

<section class="dialog settings" role="dialog" aria-label="ControlTag Datenübernahme-Einstellungen">
  <div class="dtitle"><svg class="logo"><use href="#logo"/></svg><h1 class="wtitle">ControlTag Datenübernahme-Einstellungen</h1><button class="q">?</button><button class="cl" aria-label="Schließen"><svg width="12" height="12"><path d="M1 1l10 10M11 1L1 11" stroke="currentColor"/></svg></button></div>
  <div class="sbody">
    <div class="left">
      <div class="brow"><button class="btn strong b150">Alle Felder überschreiben</button><button class="btn b158">Nur E/A-Adresse überschreiben</button><button class="btn b119">Nur Alias überschreiben</button><button class="btn strong b118">Alle Daten behalten</button></div>
      <fieldset>
        <legend>Zu überschreibende Datenfelder</legend>
        <div class="checks">
          <label><input type="checkbox" checked>Typ</label><label><input type="checkbox" checked>Aliasverknüpfung</label>
          <label><input type="checkbox" checked>Zugriff</label><label><input type="checkbox" checked>Verbindung</label>
          <label><input type="checkbox" checked>Initialwert</label><label><input type="checkbox" checked>Benutzerdefinierte Datenfelder</label>
        </div>
        <hr>
        <div class="checks">
          <label><input type="checkbox" checked>SPS-Symbolname</label><label><input type="checkbox" checked>Feldbus-Datenfelder</label>
          <label><input type="checkbox" checked>SPS-E/A-Adresse</label><span></span>
          <label><input type="checkbox" checked>SPS-Kommentar</label>
        </div>
      </fieldset>
    </div>
    <div class="right"><span class="mark"><button class="btn b74 default">OK</button><svg class="hl" width="102" height="30"><path d="M0 2h10V0h92v18H76v10H50v-2H5v-8H2V8H0z" fill="#ff0"/></svg></span><button class="btn b74">Abbrechen</button></div>
  </div>
</section>
</body>
</html>
```
FILE: styles.css
```
* { box-sizing: border-box; }
html, body { margin: 0; height: 100%; }
body { font: 11px/16px Roboto, "Open Sans", sans-serif; color: #000; overflow: hidden; position: relative; background: #f0f0f0; }
button, input, select { font: inherit; color: inherit; margin: 0; border-radius: 0; }
button { border: 0; background: none; padding: 0; white-space: nowrap; }
h1, h2, h3, p, pre, ul { margin: 0; padding: 0; font-weight: normal; font-size: inherit; }
svg { display: block; flex: none; }
.defs { position: absolute; width: 0; height: 0; }

.app { height: 100vh; border: 1px solid #ff0; display: grid; grid-template-rows: 22px 33px 32px minmax(0, 1fr) 28px 22px; }
.logo { width: 10px; height: 14px; }
.wtitle { font-size: 12px; }
.dim { color: #999; }

.titlebar { display: flex; align-items: center; background: #fff; padding-left: 4px; gap: 8px; }
.wincontrols { margin-left: auto; display: flex; align-self: flex-start; }
.wincontrols button { width: 46px; height: 18px; display: flex; align-items: center; justify-content: center; }

.menubar { display: flex; align-items: center; background: #222; color: #d8d8d8; padding: 0 0 2px 14px; gap: 19px; font: 15px/28px "Open Sans", sans-serif; }
.playback { margin-left: auto; display: flex; align-items: center; }
.playback button { width: 32px; height: 30px; display: flex; align-items: center; justify-content: center; color: #fff; }
.playback .w-m { width: 36px; }
.playback .w-s { width: 16px; }
.playback .w-x { width: 18px; }
.vbar { width: 1px; height: 22px; background: #eee; margin: 0 2px; }
.plc { width: 22px; height: 22px; border-radius: 50%; background: #e8e8e8; color: #555; font: bold 9px/22px Roboto, sans-serif; text-align: center; margin: 0 12px 0 3px; }
.lens { margin-right: 9px; }
.playback input { width: 134px; height: 18px; background: #222; border: 1px solid #909090; padding: 0 3px; font: 11px/16px "Open Sans", sans-serif; }
.playback input::placeholder { color: #999; opacity: 1; }
.lang { color: #000; font: 11px/16px "Open Sans", sans-serif; padding: 0 6px 0 9px; }

.toolbar { display: flex; align-items: center; background: #efefef; }
.toolbar button { width: 31px; height: 28px; display: flex; flex: none; align-items: center; justify-content: center; }
.toolbar svg { width: 23px; height: 23px; }
.toolbar svg.wide { width: 28px; }
.toolbar button.dd { width: 18px; color: #000; }
.toolbar button.dd.off { color: #999; }
.toolbar button.dd.narrow { width: 16px; }
.toolbar button.dd svg { width: 14px; height: 16px; }
.toolbar .grip { width: 10px; height: 24px; flex: none; background: radial-gradient(circle, #aaa 1px, transparent 1px) center / 4px 4px repeat-y; }
.toolbar .grip.first { width: 7px; }
.toolbar .sep { width: 6px; height: 24px; flex: none; background: linear-gradient(#c8c8c8, #c8c8c8) center / 1px 100% no-repeat; }
.toolbar .auto { flex-direction: column; }
.toolbar .auto svg { height: 16px; }
.auto b { font: bold 7px/7px Roboto, sans-serif; }
.toolbar.bottom button { width: 33px; }
.toolbar.bottom button.dd { width: 18px; }
.toolbar.bottom button.narrow { width: 16px; }
.bottom svg { width: 24px; height: 24px; }
.toolbar.bottom .grip { width: 6px; }
.toolbar.bottom .grip.first { width: 8px; }
.toolbar.bottom .sep { width: 8px; }
.bottom .on { background: #ccc; border: 1px solid #a8a8a8; }

.work { display: grid; grid-template-columns: 306px minmax(0, 1fr) 485px; grid-template-rows: minmax(0, 1fr) 112px; }
.model { grid-row: 1 / 3; display: flex; flex-direction: column; background: #efefef; border-right: 1px solid #d0d0d0; }
.viewport { background: #a8a8a8; display: flex; align-items: flex-end; }
.console { grid-column: 2 / 4; }

.dockhead { display: flex; align-items: center; height: 21px; flex: none; padding-left: 1px; gap: 4px; }
.dockbtns { margin-left: auto; display: flex; align-items: center; padding-right: 4px; }
.model .dockbtns { padding-right: 6px; }
.dockbtns svg { width: 12px; height: 12px; margin: 0 9px 0 10px; color: #666; }
.dockbtns .m { height: 10px; margin: 0 7px 0 15px; }
.dockbtns .c { width: 10px; height: 10px; margin: 0 6px 0 7px; }

.tree { flex: 1; list-style: none; padding-top: 2px; background: linear-gradient(#e1e1e1, #bdbdbd); font: 11px/16px "Open Sans", sans-serif; }
.tree li { display: flex; align-items: center; height: 16px; padding-right: 2px; }
.tree .l2 { padding-left: 6px; }
.tree .l3 { padding-left: 12px; }
.tree .sel { background: linear-gradient(#efefef, #efefef) 12px 0 no-repeat; }
.tree span { flex: 1; padding-left: 6px; white-space: nowrap; }
.tree .tw { width: 7px; height: 7px; margin-right: 4px; }
.tree .thin { opacity: .6; }
.tree .ic { width: 14px; height: 12px; color: #555; }
.tree .blue { color: #33688c; }
.tree .red { color: #e01414; }
.tree .green { color: #1c9a44; --lid: #1cb04c; }
.tree li > i:not(.tw), .tree .a, .tree .b { width: 16px; margin-right: 4px; }
.tree .a { height: 13px; }
.tree .b { height: 16px; }
.tree .cf { width: 15px; height: 15px; margin: 0 2px 0 19px; color: #999; }

.btn { height: 21px; border: 1px solid #adadad; background: #e1e1e1; display: block; flex: none; padding: 0 2px; text-align: center; }
.props { background: #f0f0f0; display: flex; flex-direction: column; border-left: 2px solid #f0f0f0; }
.props .dockhead { padding-left: 3px; }
.tabs { display: flex; height: 24px; }
.tabs button { display: flex; align-items: center; justify-content: center; gap: 5px; border-top: 1px solid #d9d9d9; border-right: 1px solid #d9d9d9; width: 73px; height: 23px; padding-top: 2px; font-family: "Open Sans", sans-serif; }
.tabs button:nth-child(4) { width: 93px; }
.tabs .on { background: #fff; height: 24px; width: 65px; }
.tabnav { display: flex; gap: 10px; align-items: center; margin-left: auto; padding-right: 3px; }
.tagtable { margin: 9px 9px 0 8px; flex: 1 1 348px; background: #fff; border: 1px solid #828790; }
table { border-collapse: collapse; table-layout: fixed; width: 100%; }
th { font-weight: normal; }
.tagtable th { height: 23px; padding: 0 0 0 4px; text-align: left; border-right: 1px solid #e0e0e0; font-family: "Open Sans", sans-serif; }
.p0, .p2 { width: 39px; } .p1 { width: 41px; } .p3 { width: 39px; } .p4 { width: 57px; }
.tagbtn { display: flex; justify-content: flex-end; padding: 15px 19px 19px; border-bottom: 1px solid #d8d8d8; }
.tagbtn .btn { width: 219px; font-family: "Open Sans", sans-serif; }
.props .com { height: 32px; padding-bottom: 6px; }
.com h2 { width: 190px; text-align: right; }
.conn { border-top: 1px solid #a0a0a0; border-bottom: 1px solid #a0a0a0; box-shadow: inset 0 1px #fff, 0 1px #fff; padding: 7px 1px 12px 3px; margin: 0 1px; height: 63px; }
.crow { display: flex; gap: 3px; align-items: center; }
.crow select { flex: 1; height: 20px; appearance: none; border: 1px solid #adadad; background: #e1e1e1 conic-gradient(from -45deg at 50% 100%, #000 90deg, transparent 0) right 5px center / 8px 4px no-repeat; background: linear-gradient(45deg, transparent 50%, #000 50%) right 9px center / 4px 4px no-repeat, linear-gradient(-45deg, transparent 50%, #000 50%) right 5px center / 4px 4px no-repeat, #e1e1e1; }
.crow .btn { height: 20px; }
.second { margin-top: 2px; gap: 5px; }
.second span { width: 135px; text-align: right; }
.stop { background: #cce4f7; border-color: #005499; }
.imp { margin-left: auto; }
.rule { height: 16px; border-bottom: 1px solid #a0a0a0; box-shadow: 0 1px #fff; flex: none; }
.io { display: flex; gap: 5px; padding: 9px 1px 4px 4px; height: 221px; }
.io > div { flex: 1; display: flex; flex-direction: column; }
.io h3 { height: 16px; }
.list { flex: 1; border: 1px solid #828790; background: #fff; display: flex; flex-direction: column; justify-content: flex-end; }
.list.first { margin-top: 16px; }
.hs { display: flex; align-items: center; height: 16px; background: #f0f0f0; flex: none; }
.hs svg, .vs svg { width: 8px; height: 8px; margin: 0 4px; }
.hs div { flex: 1; height: 100%; }
.hs i { display: block; height: 15px; background: #cdcdcd; }
.t1 { width: 78%; } .t2 { width: 77%; } .t3 { width: 93%; }
.vs { width: 16px; background: #f0f0f0; display: flex; flex-direction: column; align-items: center; padding: 6px 0; flex: none; }
.vs i { width: 15px; height: 18px; background: #cdcdcd; margin-top: auto; margin-bottom: 6px; }

.console { display: flex; flex-direction: column; background: #f0f0f0; }
.console .dockhead { height: 23px; padding-left: 5px; }
.ctabs button { width: 33px; height: 20px; background: #d4d4d4; border: 1px solid #b0b0b0; display: flex; align-items: center; justify-content: center; }
.ctabs button + button { margin-left: -5px; }
.out { flex: 1; display: flex; background: #fff; border: 1px solid #7a7a7a; border-bottom-width: 2px; }
.out pre { flex: 1; padding: 1px 0 0 5px; font: 12px/14px "Liberation Mono", monospace; }
.console input { height: 17px; border: 1px solid #7a7a7a; border-top: 0; background: #fff; }

.status { display: flex; align-items: center; border-top: 1px solid #000; border-bottom: 1px solid #000; background: #f0f0f0; padding-left: 718px; padding-top: 1px; }
.progress, .load { position: relative; width: 302px; height: 17px; background: #e9e9e9; text-align: center; line-height: 17px; border: 1px solid #d0d0d0; border-width: 0 1px; }
.progress i, .load i { position: absolute; left: 0; top: 0; bottom: 0; background: linear-gradient(#7e7e7e, #a6a6a6); }
.progress span, .load span { position: relative; }
.state { margin-left: auto; display: flex; align-items: center; gap: 1px; }
.state > span { margin-right: 2px; }
.halt { width: 51px; height: 16px; padding-left: 2px; font-weight: normal; color: #ffb573; background: linear-gradient(#b5401f, #9c4733); border: 1px solid #e0653c; line-height: 14px; }
.halt.com { width: 110px; }
.load { width: 100px; margin: 0 4px; border: 0; border-bottom: 1px solid #b04020; }
.load i { background: #66b91f; }
time { width: 66px; white-space: nowrap; }

.dialog { position: absolute; display: flex; flex-direction: column; border: 1px solid #777; box-shadow: 2px 4px 14px rgba(0, 0, 0, .4); }
.manager { left: 408px; right: 375px; top: 227px; bottom: 111px; background: #f0f0f0; }
.settings { left: 639px; right: 607px; top: 451px; height: 255px; }
.dtitle { display: flex; align-items: center; height: 30px; flex: none; background: #fff; padding-left: 11px; gap: 8px; }
.q { margin-left: auto; width: 20px; font-size: 14px; }
.cl { width: 50px; height: 24px; display: flex; align-items: center; justify-content: center; margin-right: -2px; }
.gridbox { flex: 1; display: flex; flex-direction: column; border: 1px solid #828790; border-width: 1px 1px 1px 0; background: #fff; }
.tags th { height: 23px; padding: 3px 0 0; border-right: 1px solid #e0e0e0; white-space: nowrap; position: relative; }
.sorted::before { content: ""; position: absolute; left: 17px; top: -3px; width: 5px; height: 5px; border: solid #888; border-width: 0 1px 1px 0; transform: rotate(45deg); }
.tags td { height: 30px; padding: 2px 0 0 5px; background: #e5e5e5; color: #008000; font-size: 12px; white-space: nowrap; }
.tags td.no { background: #fff; color: #000; font-size: 11px; padding-left: 4px; }
.cell { display: flex; align-items: center; gap: 6px; }
.w15 { width: 15px; } .w40 { width: 40px; } .w65 { width: 65px; } .w48 { width: 48px; } .w87 { width: 87px; } .w66 { width: 66px; } .w75 { width: 75px; } .w101 { width: 101px; } .w67 { width: 67px; } .w79 { width: 79px; } .w124 { width: 124px; } .w77 { width: 77px; } .w89 { width: 89px; } .w106 { width: 106px; }
.blank { flex: 1; border-left: 15px solid #f0f0f0; }
.log { height: 71px; flex: none; display: flex; background: #fff; border: 1px solid #777; border-width: 1px 1px 1px 0; margin-top: 1px; }
.lines { flex: 1; padding-left: 3px; display: flex; flex-direction: column; gap: 10px; white-space: nowrap; overflow: hidden; }
.dfoot { height: 45px; flex: none; display: flex; align-items: center; gap: 8px; padding: 2px 1px 0 10px; background: linear-gradient(170deg, #f6f6f7, #dfdee4); position: relative; }
.b74 { width: 74px; } .b106 { width: 106px; } .b107 { width: 107px; } .b126 { width: 126px; } .b150 { width: 150px; } .b158 { width: 158px; } .b119 { width: 119px; } .b118 { width: 118px; }
.dfoot .gap { margin-left: 39px; }
.push { margin-left: auto; }
.size { align-self: flex-end; margin: 0 0 3px -7px; }
.mark { position: relative; }
.hl { position: absolute; left: -8px; top: -8px; mix-blend-mode: multiply; pointer-events: none; }

.sbody { flex: 1; display: flex; justify-content: space-between; padding: 13px 12px 0; background: linear-gradient(160deg, #fdfdfd, #dfdee3); }
.left { width: 567px; }
.brow { display: flex; justify-content: space-between; }
.strong { font: bold 11px/16px "DejaVu Sans Condensed", "DejaVu Sans", sans-serif; }
.right { display: flex; flex-direction: column; gap: 8px; }
.right .hl { left: -1px; top: -5px; }
.default { border: 2px solid #0078d7; }
fieldset { border: 0; padding: 0; margin: 6px 0 0; }
legend { padding: 0; display: flex; align-items: center; gap: 4px; width: 100%; }
legend::after { content: ""; flex: 1; height: 2px; background: #a0a0a0; border-bottom: 1px solid #fff; }
.checks { display: grid; grid-template-columns: 278px 1fr; grid-auto-rows: 23px; padding: 4px 0 0 8px; }
.checks label { display: flex; align-items: center; gap: 4px; }
.checks input { appearance: none; width: 13px; height: 13px; border: 1px solid #333; background: #fff; position: relative; }
.checks input:checked::after { content: ""; position: absolute; left: 4px; top: 0; width: 4px; height: 8px; border: solid #333; border-width: 0 1px 1px 0; transform: rotate(42deg); }
hr { border: 0; height: 2px; background: #a0a0a0; border-bottom: 1px solid #fff; margin: 2px 9px 1px 8px; }
```
